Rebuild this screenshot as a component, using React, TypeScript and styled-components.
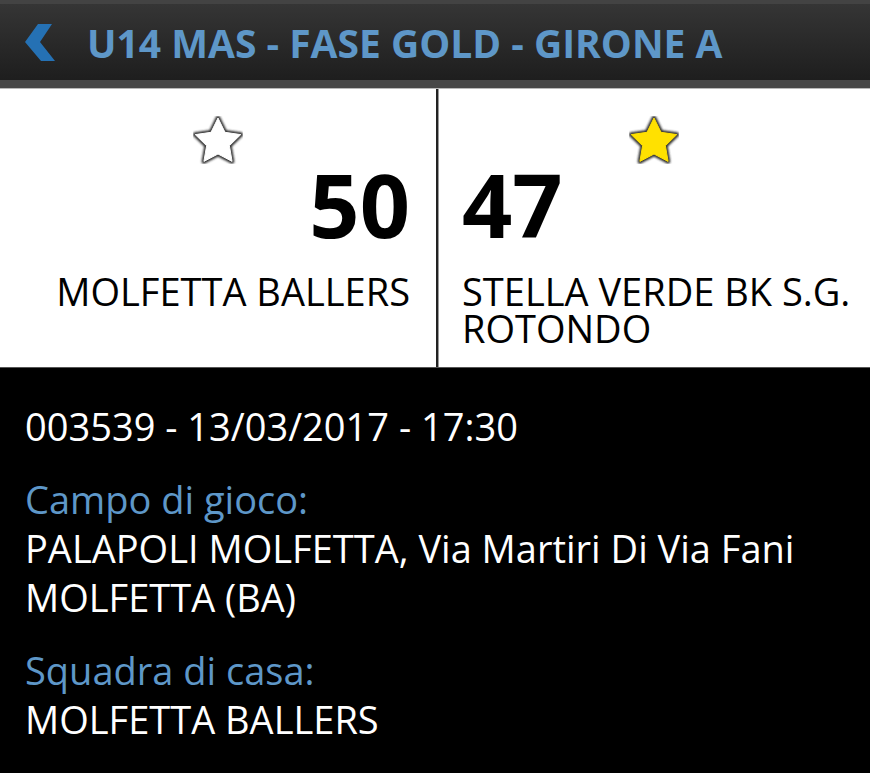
import styled, { createGlobalStyle } from "styled-components"

const GlobalStyle = createGlobalStyle`
  html, body {
    margin: 0;
    padding: 0;
    background: #000;
  }
  body {
    font-family: "Open Sans", "Liberation Sans", sans-serif;
    width: 870px;
    height: 773px;
    overflow: hidden;
  }
`

type Side = "left" | "right"
type Team = { name: string; score: number; starred: boolean }

const home: Team = { name: "MOLFETTA BALLERS", score: 50, starred: false }
const away: Team = { name: "STELLA VERDE BK S.G. ROTONDO", score: 47, starred: true }

const starPath =
  "M25 2 L32 16.3 L47.8 18.6 L36.4 29.7 L39.1 45.4 L25 38 L10.9 45.4 L13.6 29.7 L2.2 18.6 L18 16.3 Z"

function Star({ filled }: { filled: boolean }) {
  const id = filled ? "starGlowOn" : "starGlowOff"
  return (
    <StarIcon viewBox="0 0 50 48" width="50" height="48">
      <defs>
        <filter id={id} x="-30%" y="-30%" width="160%" height="160%">
          <feGaussianBlur stdDeviation="1.3" />
        </filter>
      </defs>
      <path
        d={starPath}
        fill="none"
        stroke="#2e2e2e"
        strokeWidth="4.5"
        strokeLinejoin="round"
        filter={`url(#${id})`}
      />
      <path
        d={starPath}
        fill={filled ? "#ffe100" : "#ffffff"}
        stroke={filled ? "#ffe100" : "#ffffff"}
        strokeWidth="1"
        strokeLinejoin="round"
      />
    </StarIcon>
  )
}

function TeamColumn({ team, side }: { team: Team; side: Side }) {
  return (
    <Column side={side}>
      <StarRow side={side}>
        <Star filled={team.starred} />
      </StarRow>
      <Score>{team.score}</Score>
      <TeamName>{team.name}</TeamName>
    </Column>
  )
}

export default function App() {
  return (
    <>
      <GlobalStyle />
      <Page>
        <Header>
          <BackButton>
            <svg viewBox="0 0 34 38" width="34" height="38">
              <polygon points="0,18 13,0 27,0 15,18 30,37 16,37" fill="#2571b4" />
            </svg>
          </BackButton>
          <Title>U14 MAS - FASE GOLD - GIRONE A</Title>
        </Header>

        <Scoreboard>
          <TeamColumn team={home} side="left" />
          <Divider />
          <TeamColumn team={away} side="right" />
        </Scoreboard>

        <Details>
          <InfoLine>003539 - 13/03/2017 - 17:30</InfoLine>
          <InfoGroup>
            <Label>Campo di gioco:</Label>
            <InfoLine>PALAPOLI MOLFETTA, Via Martiri Di Via Fani</InfoLine>
            <InfoLine>MOLFETTA (BA)</InfoLine>
          </InfoGroup>
          <InfoGroup>
            <Label>Squadra di casa:</Label>
            <InfoLine>MOLFETTA BALLERS</InfoLine>
          </InfoGroup>
        </Details>
      </Page>
    </>
  )
}

const Page = styled.div`
  width: 870px;
  min-height: 773px;
  background: #000;
  display: flex;
  flex-direction: column;
`

const Header = styled.header`
  height: 76px;
  display: flex;
  align-items: center;
  gap: 28px;
  padding-left: 25px;
  background: linear-gradient(#353535, #1e1e1e);
  border-top: 4px solid #434343;
  border-bottom: 8px solid #474747;
  box-shadow: 0 1px 0 #b8b8b8;
`

const BackButton = styled.div`
  width: 34px;
  height: 38px;
  display: flex;
  margin-top: 2px;
`

const Title = styled.h1`
  margin: 0;
  color: #5e97c8;
  font-size: 39px;
  font-weight: 700;
  white-space: nowrap;
`

const Scoreboard = styled.section`
  display: grid;
  grid-template-columns: 436px 2px 1fr;
  background: #fff;
  margin-top: 1px;
  border-bottom: 1px solid #555;
`

const Divider = styled.div`
  background: #222;
  box-shadow: 1px 0 0 #999;
`

const Column = styled.div<{ side: Side }>`
  display: flex;
  flex-direction: column;
  align-items: ${(p) => (p.side === "left" ? "flex-end" : "flex-start")};
  text-align: ${(p) => (p.side === "left" ? "right" : "left")};
  padding: 27px ${(p) => (p.side === "left" ? "26px" : "14px")} 20px
    ${(p) => (p.side === "left" ? "0" : "24px")};
  color: #000;
`

const StarRow = styled.div<{ side: Side }>`
  align-self: stretch;
  display: flex;
  justify-content: center;
  height: 45px;
  margin: ${(p) => (p.side === "left" ? "0 -26px 0 0" : "0 -14px 0 -24px")};
`

const StarIcon = styled.svg`
  display: block;
`

const Score = styled.div`
  font-size: 88px;
  line-height: 88px;
  font-weight: 700;
  margin-top: -1px;
`

const TeamName = styled.div`
  margin-top: 25px;
  font-size: 38px;
  line-height: 37px;
`

const Details = styled.section`
  padding: 34px 25px 0;
  color: #fff;
  display: flex;
  flex-direction: column;
  gap: 24px;
`

const InfoGroup = styled.div`
  display: flex;
  flex-direction: column;
`

const InfoLine = styled.div`
  font-size: 38px;
  line-height: 49px;
`

const Label = styled(InfoLine)`
  color: #5e97c8;
`
